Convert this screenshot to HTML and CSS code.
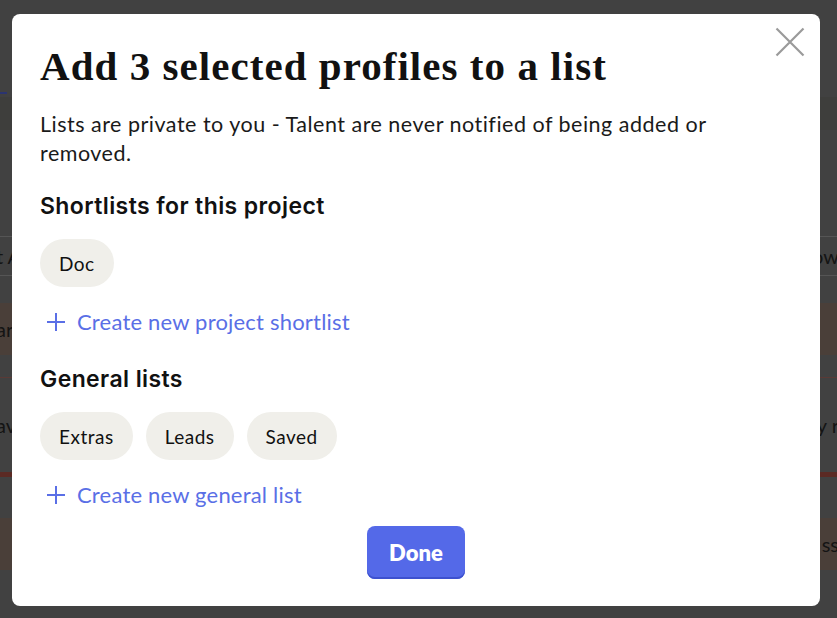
FILE: index.html
```html
<!DOCTYPE html>
<html lang="en">
<head>
<meta charset="utf-8">
<title>Add to list</title>
<link rel="stylesheet" href="styles.css">
</head>
<body>
<div class="page">
  <div class="bg-top"><span class="bg-mark"></span><div class="bg-faint"></div></div>
  <div class="bg-row bg-row-a"><span class="bg-left">t A</span><span class="bg-right">ow</span></div>
  <div class="bg-gap-a"></div>
  <div class="bg-band"><span class="bg-left">ar</span><span class="bg-right"></span></div>
  <div class="bg-gap-b"></div>
  <div class="bg-row bg-row-b"><span class="bg-left">av</span><span class="bg-right">y r</span></div>
  <div class="bg-red"></div>
  <div class="bg-gap-c"></div>
  <div class="bg-band bg-band-b"><span class="bg-left"></span><span class="bg-right">ss</span></div>
</div>

<div class="overlay">
  <div class="modal" role="dialog">
    <button class="close" aria-label="Close">
      <svg width="30" height="30" viewBox="0 0 30 30"><path d="M1.5 1.5 L28.5 28.5 M28.5 1.5 L1.5 28.5" stroke="#9a9a9a" stroke-width="2.2" fill="none"/></svg>
    </button>
    <h1 class="title">Add 3 selected profiles to a list</h1>
    <p class="intro">Lists are private to you - Talent are never notified of being added or removed.</p>

    <h2 class="section section-first">Shortlists for this project</h2>
    <div class="chips">
      <span class="chip">Doc</span>
    </div>
    <a class="create" href="#"><svg class="plus" width="18" height="18" viewBox="0 0 18 18"><path d="M9 0 V18 M0 9 H18" stroke="currentColor" stroke-width="2" fill="none"/></svg><span>Create new project shortlist</span></a>

    <h2 class="section section-next">General lists</h2>
    <div class="chips">
      <span class="chip">Extras</span>
      <span class="chip">Leads</span>
      <span class="chip">Saved</span>
    </div>
    <a class="create" href="#"><svg class="plus" width="18" height="18" viewBox="0 0 18 18"><path d="M9 0 V18 M0 9 H18" stroke="currentColor" stroke-width="2" fill="none"/></svg><span>Create new general list</span></a>

    <div class="actions">
      <button class="done">Done</button>
    </div>
  </div>
</div>
</body>
</html>
```

FILE: styles.css
```css
* { box-sizing: border-box; }
html, body { margin: 0; padding: 0; }
body {
  width: 837px;
  height: 618px;
  overflow: hidden;
  background: #414141;
  font-family: Lato, "Liberation Sans", sans-serif;
}

/* dimmed page underneath */
.page { width: 837px; }
.bg-top { height: 236px; padding-top: 92px; }
.bg-mark { display: block; width: 7px; height: 2px; background: #2b3470; }
.bg-faint { height: 33px; margin-top: 3px; background: #3e3e3c; }
.bg-row {
  display: flex;
  justify-content: space-between;
  align-items: center;
  color: #141414;
  font-size: 20px;
  white-space: nowrap;
}
.bg-row-a { height: 40px; border-top: 1px solid #555; border-bottom: 1px solid #555; }
.bg-gap-a { height: 27px; }
.bg-band {
  height: 52px;
  background: #4a3f39;
  display: flex;
  justify-content: space-between;
  align-items: center;
  color: #141414;
  font-size: 20px;
}
.bg-gap-b { height: 23px; border-bottom: 1px solid #5a3a36; }
.bg-row-b { height: 94px; }
.bg-red { height: 5px; background: #5b2a24; }
.bg-gap-c { height: 41px; }
.bg-band-b { height: 52px; }
.bg-left { margin-left: -4px; }
.bg-right { margin-right: -2px; }

/* modal */
.overlay {
  position: fixed;
  inset: 0;
  display: flex;
  padding: 14px 17px 12px 12px;
}
.modal {
  position: relative;
  flex: 1;
  background: #fff;
  border-radius: 8px;
  padding: 30px 28px 0 28px;
  color: #111;
}
.close {
  position: absolute;
  top: 13px;
  right: 15px;
  width: 30px;
  height: 30px;
  padding: 0;
  border: 0;
  background: none;
  cursor: pointer;
}
.close svg { display: block; }

.title {
  margin: 0;
  font-family: "Liberation Serif", "Times New Roman", serif;
  font-weight: 700;
  font-size: 41px;
  letter-spacing: 1.05px;
  line-height: 44px;
  color: #111;
}
.intro {
  margin: 22px 0 0;
  max-width: 700px;
  font-size: 21.5px;
  letter-spacing: 0.5px;
  line-height: 29px;
  color: #1a1a1a;
}
.section {
  margin: 0;
  font-family: Inter, Lato, sans-serif;
  font-size: 23px;
  font-weight: 600;
  letter-spacing: 0.4px;
  line-height: 30px;
  color: #111;
}
.section-first { margin-top: 23px; }
.section-next { margin-top: 27px; }
.chips {
  display: flex;
  gap: 13px;
  margin-top: 18px;
}
.chip {
  display: inline-flex;
  align-items: center;
  height: 48px;
  padding: 0 19px;
  border-radius: 24px;
  background: #f0efea;
  font-size: 19px;
  letter-spacing: 0.5px;
  color: #111;
}
.create {
  display: flex;
  align-items: center;
  gap: 12px;
  margin-top: 20px;
  padding-left: 7px;
  color: #5a6fe6;
  font-size: 22px;
  letter-spacing: 0.2px;
  line-height: 30px;
  text-decoration: none;
}
.plus { display: block; }
.actions {
  display: flex;
  justify-content: center;
  margin-top: 16px;
}
.done {
  height: 53px;
  padding: 0 22px;
  border: 0;
  border-radius: 8px;
  background: #5469e8;
  box-shadow: inset 0 -2px 0 #3d51cf;
  color: #fff;
  font-family: Lato, "Liberation Sans", sans-serif;
  font-weight: 800;
  font-size: 22px;
  cursor: pointer;
}
```
